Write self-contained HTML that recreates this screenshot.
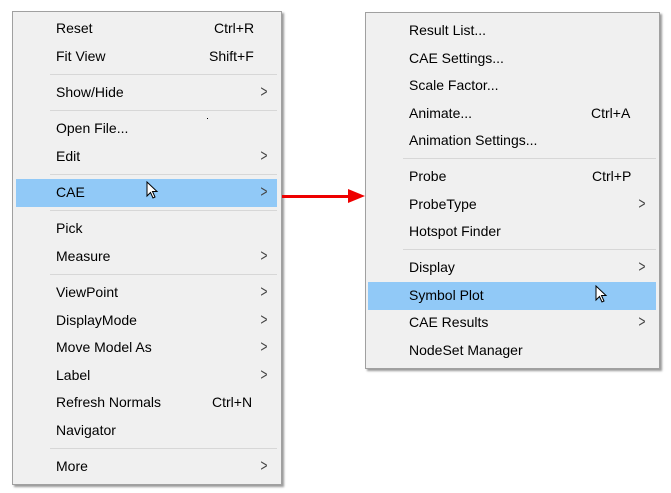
<!DOCTYPE html>
<html><head><style>
body{margin:0;width:671px;height:493px;background:#fff;position:relative;overflow:hidden;font-family:"Liberation Sans",sans-serif;font-size:14px;color:#000}
.m{position:absolute;background:#f0f0f0;border:1px solid #a0a0a0;box-shadow:2px 2px 2px #999}
.i,.s,.a,.sep,.h{position:absolute}
.i{white-space:nowrap;line-height:16px}
.sep{height:1px;background:#d7d7d7}
.h{background:#91c9f7}
.a{font-size:17px;color:#444;transform:scaleX(0.7);line-height:16px}
</style></head><body>
<div class="m" style="left:12px;top:11px;width:268px;height:472px"></div>
<div class="h" style="left:16px;top:179px;width:261px;height:28px"></div>
<div class="m" style="left:365px;top:12px;width:293px;height:355px"></div>
<div class="h" style="left:368px;top:282px;width:288px;height:28px"></div>

<div style="position:absolute;left:282px;top:195px;width:70px;height:3px;background:#e00"></div>
<svg style="position:absolute;left:348px;top:189px" width="18" height="15"><polygon points="0,0 17,7 0,14" fill="#e00"/></svg>

<!-- left -->
<div class="i" style="left:56px;top:20px">Reset</div><div class="i" style="left:214px;top:20px">Ctrl+R</div>
<div class="i" style="left:56px;top:48px">Fit View</div><div class="i" style="left:209px;top:48px">Shift+F</div>
<div class="sep" style="left:50px;top:74px;width:227px"></div>
<div class="i" style="left:56px;top:84px">Show/Hide</div><div class="i a" style="left:259px;top:84px">&gt;</div>
<div class="sep" style="left:50px;top:110px;width:227px"></div>
<div class="i" style="left:56px;top:120px">Open File...</div>
<div style="position:absolute;left:207px;top:118px;width:1px;height:1px;background:#000"></div>
<div class="i" style="left:56px;top:148px">Edit</div><div class="i a" style="left:259px;top:148px">&gt;</div>
<div class="sep" style="left:50px;top:174px;width:227px"></div>
<div class="i" style="left:56px;top:184px">CAE</div><div class="i a" style="left:259px;top:184px">&gt;</div>
<svg style="position:absolute;left:146px;top:181px" width="14" height="20"><path d="M1 1 L1 15 L4.5 11.5 L7 17 L9 16 L6.5 10.5 L11 10.5 Z" fill="#fff" stroke="#000" stroke-width="1"/></svg>
<div class="sep" style="left:50px;top:210px;width:227px"></div>
<div class="i" style="left:56px;top:220px">Pick</div>
<div class="i" style="left:56px;top:248px">Measure</div><div class="i a" style="left:259px;top:248px">&gt;</div>
<div class="sep" style="left:50px;top:274px;width:227px"></div>
<div class="i" style="left:56px;top:284px">ViewPoint</div><div class="i a" style="left:259px;top:284px">&gt;</div>
<div class="i" style="left:56px;top:312px">DisplayMode</div><div class="i a" style="left:259px;top:312px">&gt;</div>
<div class="i" style="left:56px;top:339px">Move Model As</div><div class="i a" style="left:259px;top:339px">&gt;</div>
<div class="i" style="left:56px;top:367px">Label</div><div class="i a" style="left:259px;top:367px">&gt;</div>
<div class="i" style="left:56px;top:394px">Refresh Normals</div><div class="i" style="left:212px;top:394px">Ctrl+N</div>
<div class="i" style="left:56px;top:422px">Navigator</div>
<div class="sep" style="left:50px;top:448px;width:227px"></div>
<div class="i" style="left:56px;top:458px">More</div><div class="i a" style="left:259px;top:458px">&gt;</div>

<!-- right -->
<div class="i" style="left:409px;top:22px">Result List...</div>
<div class="i" style="left:409px;top:50px">CAE Settings...</div>
<div class="i" style="left:409px;top:77px">Scale Factor...</div>
<div class="i" style="left:409px;top:105px">Animate...</div><div class="i" style="left:591px;top:105px">Ctrl+A</div>
<div class="i" style="left:409px;top:132px">Animation Settings...</div>
<div class="sep" style="left:403px;top:158px;width:253px"></div>
<div class="i" style="left:409px;top:168px">Probe</div><div class="i" style="left:592px;top:168px">Ctrl+P</div>
<div class="i" style="left:409px;top:196px">ProbeType</div><div class="i a" style="left:637px;top:196px">&gt;</div>
<div class="i" style="left:409px;top:223px">Hotspot Finder</div>
<div class="sep" style="left:403px;top:249px;width:253px"></div>
<div class="i" style="left:409px;top:259px">Display</div><div class="i a" style="left:637px;top:259px">&gt;</div>
<div class="i" style="left:409px;top:287px">Symbol Plot</div>
<svg style="position:absolute;left:595px;top:285px" width="14" height="20"><path d="M1 1 L1 15 L4.5 11.5 L7 17 L9 16 L6.5 10.5 L11 10.5 Z" fill="#fff" stroke="#000" stroke-width="1"/></svg>
<div class="i" style="left:409px;top:314px">CAE Results</div><div class="i a" style="left:637px;top:314px">&gt;</div>
<div class="i" style="left:409px;top:342px">NodeSet Manager</div>
</body></html>
